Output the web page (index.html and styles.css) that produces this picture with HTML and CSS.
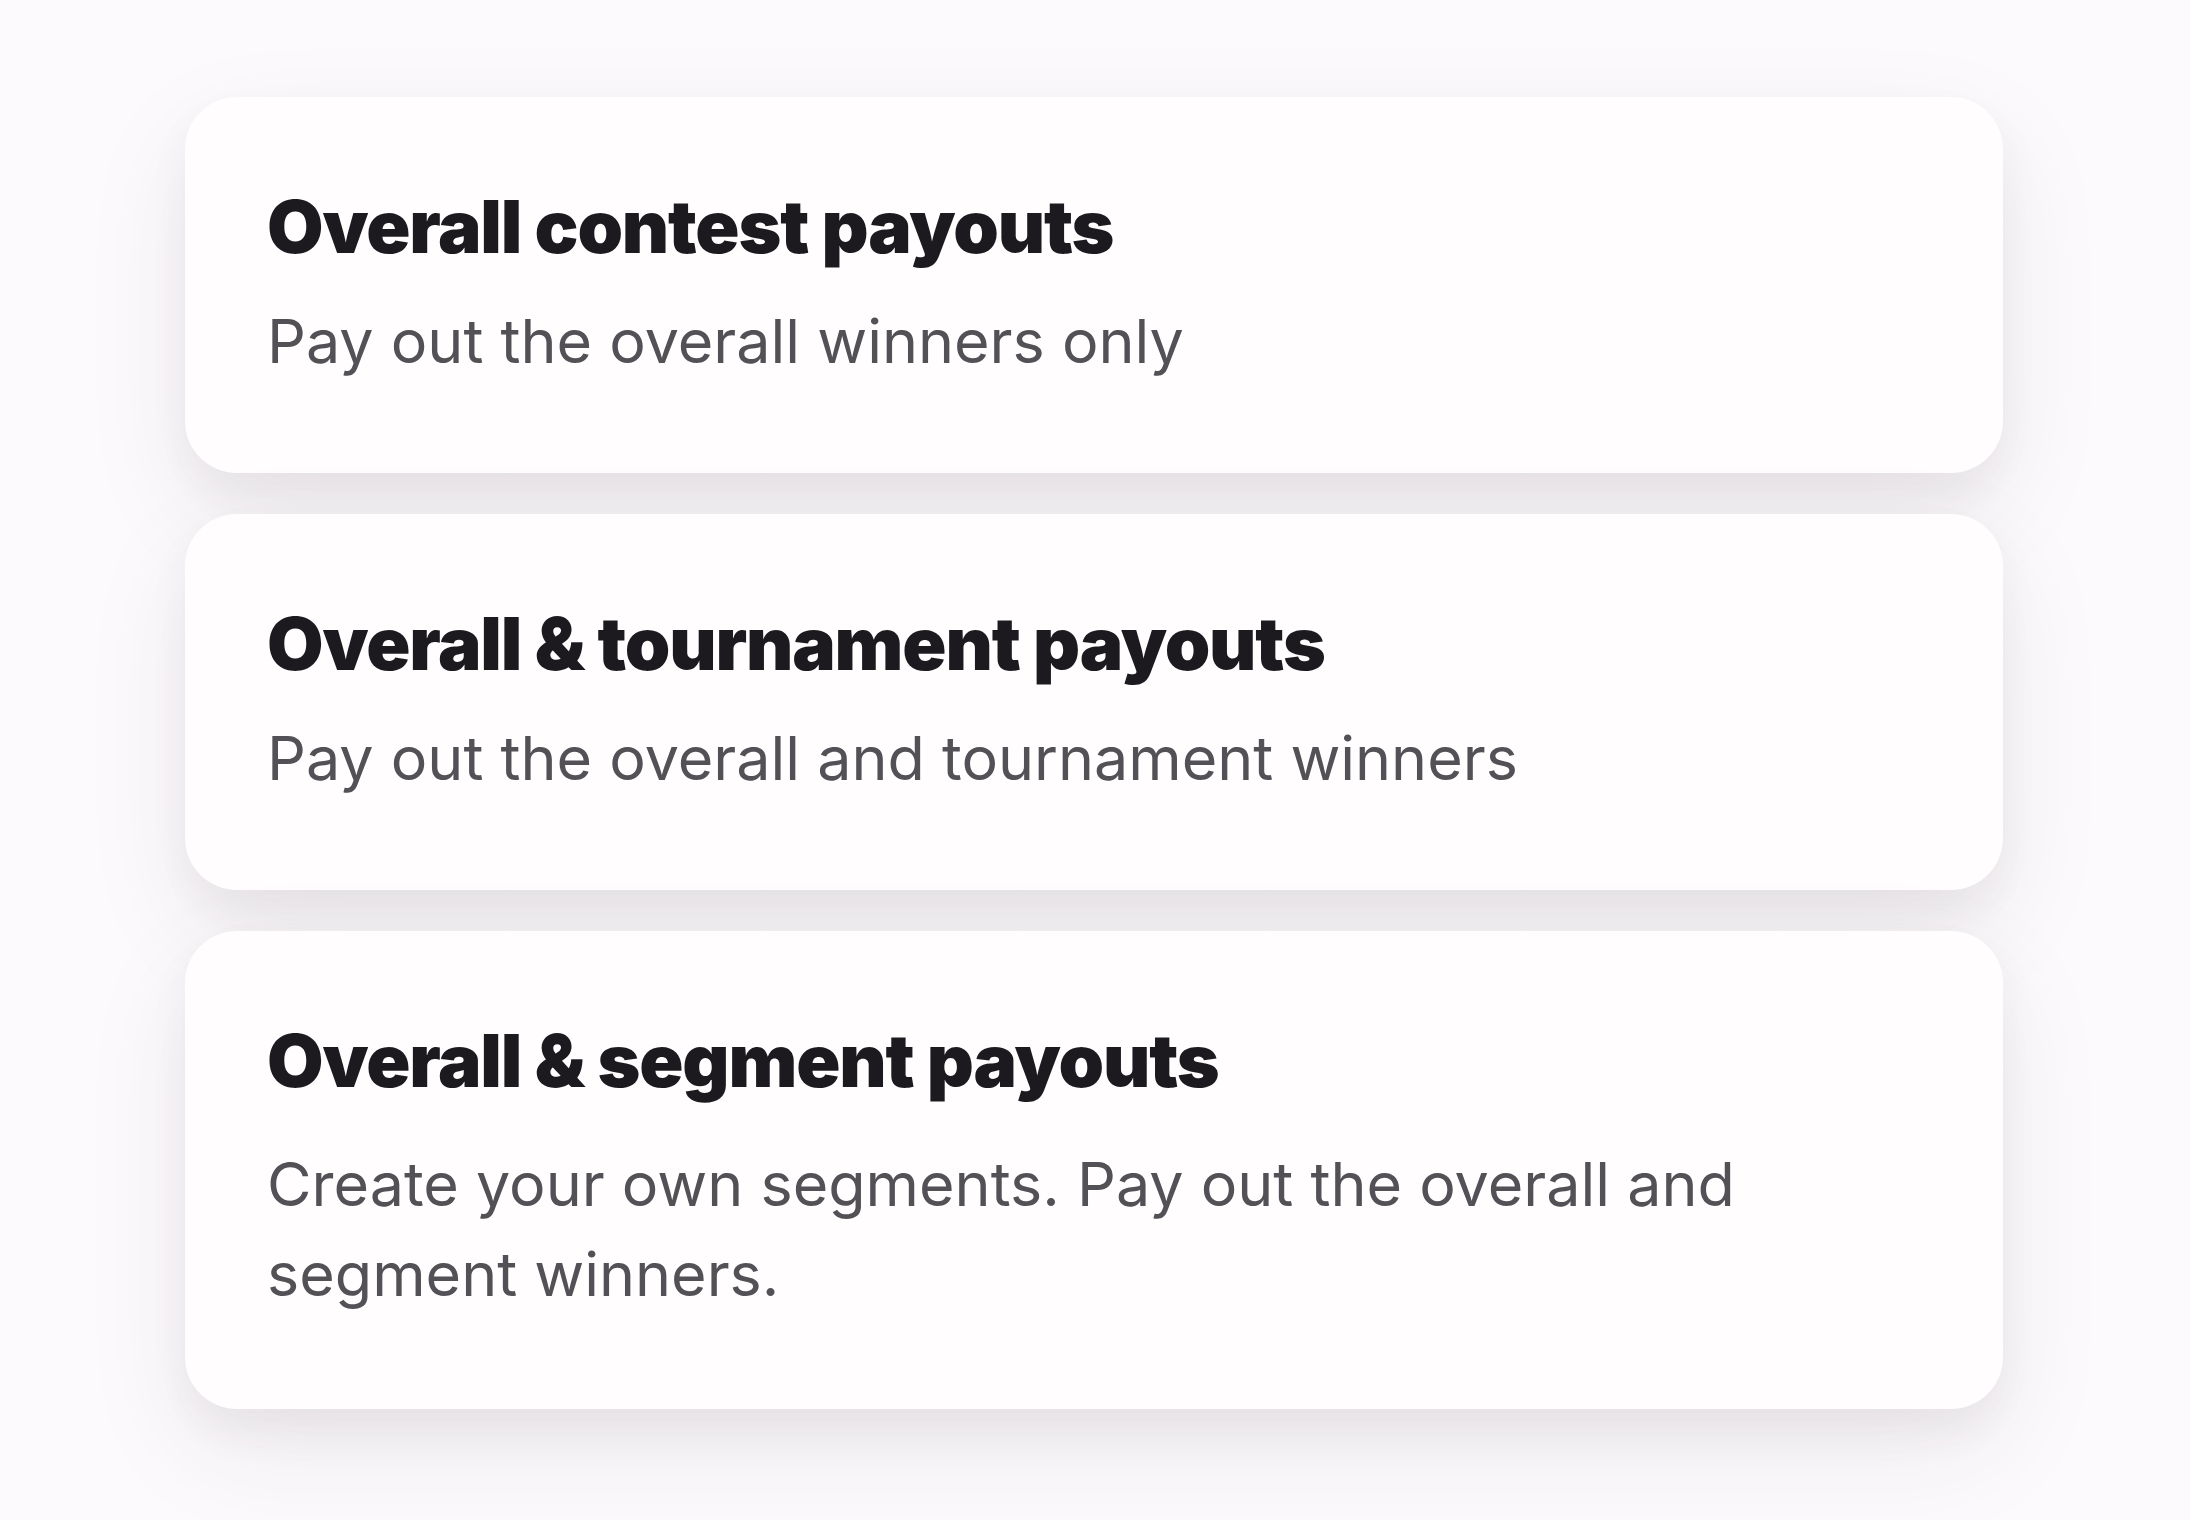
FILE: index.html
```html
<!DOCTYPE html>
<html lang="en">
<head>
<meta charset="utf-8">
<title>Payout options</title>
<link rel="stylesheet" href="styles.css">
</head>
<body>
  <main class="options">
    <section class="option-card">
      <h2 class="option-title">Overall contest payouts</h2>
      <p class="option-desc">Pay out the overall winners only</p>
    </section>
    <section class="option-card">
      <h2 class="option-title">Overall &amp; tournament payouts</h2>
      <p class="option-desc">Pay out the overall and tournament winners</p>
    </section>
    <section class="option-card">
      <h2 class="option-title">Overall &amp; segment payouts</h2>
      <p class="option-desc option-desc--multi">Create your own segments. Pay out the overall and segment winners.</p>
    </section>
  </main>
</body>
</html>
```
FILE: styles.css
```css
* {
  box-sizing: border-box;
}

html,
body {
  margin: 0;
  padding: 0;
}

body {
  background: #fcfafc;
  font-family: Inter, "Noto Sans", "Liberation Sans", sans-serif;
  min-height: 1520px;
}

.options {
  display: flex;
  flex-direction: column;
  gap: 41px;
  padding: 97px 187px 0 185px;
}

.option-card {
  background: #fffdfe;
  border-radius: 52px;
  padding: 86px 85px 95px 82px;
  box-shadow:
    0 22px 40px rgba(60, 45, 70, 0.06),
    0 40px 110px rgba(60, 45, 70, 0.08);
}

.option-title {
  margin: 0;
  font-size: 73px;
  line-height: 88px;
  font-weight: 900;
  letter-spacing: -0.016em;
  color: #1c1a1f;
}

.option-desc {
  margin: 33px 0 0;
  font-size: 61px;
  line-height: 74px;
  font-weight: 400;
  color: #535156;
}

.option-desc--multi {
  margin: 34px 0 -5px;
  line-height: 90px;
}
```
